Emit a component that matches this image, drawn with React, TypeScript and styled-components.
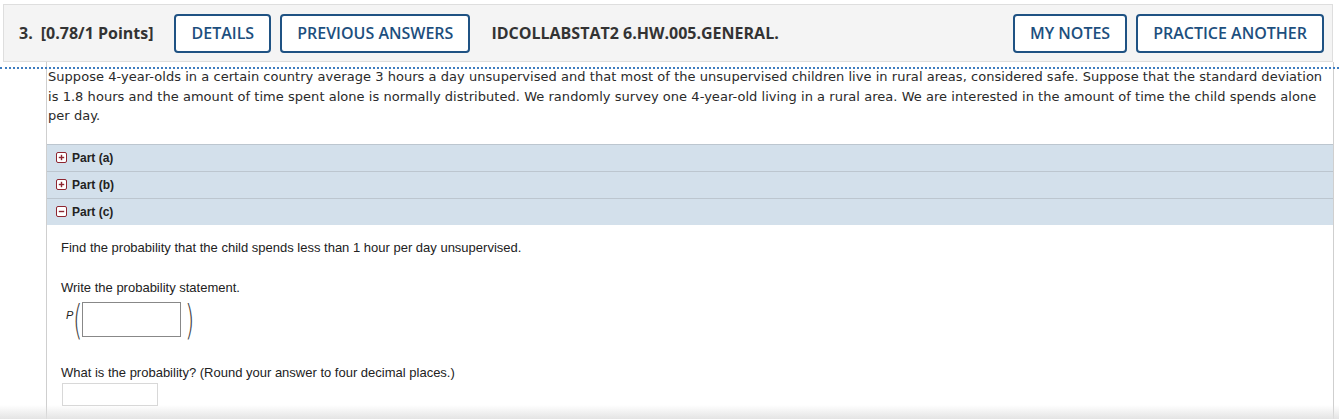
import React from "react";
import styled, { createGlobalStyle } from "styled-components";

const Global = createGlobalStyle`
  html, body { margin: 0; padding: 0; background: #fff; }
  body { width: 1339px; height: 419px; overflow: hidden; }
`;

const Page = styled.div`
  position: relative;
  width: 1339px;
  height: 419px;
  overflow: hidden;
`;

const HeaderWrap = styled.div`
  padding: 4px 6px 0 3px;
`;

const Header = styled.div`
  display: flex;
  align-items: center;
  height: 56px;
  background: #f4f4f4;
  border: 1px solid #dedede;
  padding: 0 8px 0 15px;
  font-family: "Open Sans", "Liberation Sans", sans-serif;
`;

const QNum = styled.span`
  font-weight: 700;
  font-size: 16px;
  color: #333;
  margin-right: 8px;
`;

const Points = styled.span`
  font-weight: 700;
  font-size: 16px;
  color: #333;
  margin-right: 21px;
`;

const Btn = styled.button<{ $last?: boolean }>`
  height: 39px;
  box-sizing: border-box;
  padding: 0 15px;
  margin-right: ${(p) => (p.$last ? 0 : 9)}px;
  border: 2px solid #1f5283;
  border-radius: 4px;
  background: #fff;
  color: #1d4f7e;
  font-family: "Open Sans", "Liberation Sans", sans-serif;
  font-weight: 600;
  font-size: 16px;
`;

const Code = styled.span`
  font-weight: 700;
  font-size: 16px;
  color: #333;
  margin-left: 12px;
  flex: 1;
`;

const FocusRule = styled.div`
  position: absolute;
  left: 0;
  right: 0;
  top: 67px;
  border-top: 2px dotted #3d7cc0;
`;

const Content = styled.div`
  margin: 0 5px 0 46px;
  border-left: 1px solid #cfcfcf;
  border-right: 1px solid #cfcfcf;
  height: 356px;
  padding-top: 5px;
`;

const Intro = styled.p`
  margin: 0 0 18px 0;
  padding: 0 10px 0 1px;
  font-family: "DejaVu Sans", Verdana, sans-serif;
  font-size: 13px;
  line-height: 19.5px;
  color: #2a2a2a;
  letter-spacing: 0.04px;
`;

const PartRow = styled.div`
  display: flex;
  align-items: center;
  height: 26px;
  padding-left: 9px;
  background: #d3e0eb;
  border-top: 1px solid #bcc6cf;
  font-family: "Liberation Sans", Arial, sans-serif;
  font-weight: 700;
  font-size: 12px;
  color: #222;
  gap: 5px;
`;

const PartBody = styled.div`
  padding: 15px 14px 0 14px;
  font-family: "Liberation Sans", Arial, sans-serif;
  font-size: 13px;
  color: #222;
`;

const Line = styled.div<{ $mt?: number }>`
  line-height: 16px;
  margin-top: ${(p) => p.$mt ?? 0}px;
`;

const ProbRow = styled.div`
  display: flex;
  align-items: center;
  margin-top: 6px;
  height: 36px;
  padding-left: 5px;
`;

const PLetter = styled.span`
  font-style: italic;
  font-size: 11px;
  align-self: flex-start;
  margin-top: 7px;
`;

const Paren = styled.span`
  font-family: "DejaVu Sans", sans-serif;
  font-weight: 200;
  font-size: 40px;
  color: #444;
  line-height: 36px;
  transform: scaleX(0.6);
  display: inline-block;
  margin: 0 -3px;
`;

const BigInput = styled.div`
  width: 99px;
  height: 35px;
  box-sizing: border-box;
  border: 1px solid #888;
  background: #fff;
  margin: 0 4px 0 -1px;
`;

const SmallInput = styled.div`
  width: 96px;
  height: 23px;
  box-sizing: border-box;
  border: 1px solid #d8d8d8;
  margin-top: 2px;
  margin-left: 1px;
  background: #fff;
`;

const Fade = styled.div`
  position: absolute;
  left: 0;
  right: 0;
  bottom: 0;
  height: 14px;
  background: linear-gradient(to bottom, rgba(230,230,230,0), rgba(225,225,225,0.9));
  pointer-events: none;
`;

const Toggle = ({ open }: { open?: boolean }) => (
  <svg width="11" height="11" viewBox="0 0 11 11">
    <rect x="0.5" y="0.5" width="10" height="10" rx="1.5" fill="#fff" stroke="#8e2630" />
    <line x1="2.8" y1="5.5" x2="8.2" y2="5.5" stroke="#8e2630" strokeWidth="1.4" />
    {!open && <line x1="5.5" y1="2.8" x2="5.5" y2="8.2" stroke="#8e2630" strokeWidth="1.4" />}
  </svg>
);

export default function App() {
  return (
    <Page>
      <Global />
      <HeaderWrap>
        <Header>
          <QNum>3.</QNum>
          <Points>[0.78/1 Points]</Points>
          <Btn>DETAILS</Btn>
          <Btn>PREVIOUS ANSWERS</Btn>
          <Code>IDCOLLABSTAT2 6.HW.005.GENERAL.</Code>
          <Btn>MY NOTES</Btn>
          <Btn $last>PRACTICE ANOTHER</Btn>
        </Header>
      </HeaderWrap>
      <Content>
        <Intro>
          Suppose 4-year-olds in a certain country average 3 hours a day unsupervised and that most of the
          unsupervised children live in rural areas, considered safe. Suppose that the standard deviation is 1.8
          hours and the amount of time spent alone is normally distributed. We randomly survey one 4-year-old
          living in a rural area. We are interested in the amount of time the child spends alone per day.
        </Intro>
        <PartRow>
          <Toggle />
          Part (a)
        </PartRow>
        <PartRow>
          <Toggle />
          Part (b)
        </PartRow>
        <PartRow>
          <Toggle open />
          Part (c)
        </PartRow>
        <PartBody>
          <Line>Find the probability that the child spends less than 1 hour per day unsupervised.</Line>
          <Line $mt={24}>Write the probability statement.</Line>
          <ProbRow>
            <PLetter>P</PLetter>
            <Paren>(</Paren>
            <BigInput />
            <Paren>)</Paren>
          </ProbRow>
          <Line $mt={27}>What is the probability? (Round your answer to four decimal places.)</Line>
          <SmallInput />
        </PartBody>
      </Content>
      <FocusRule />
      <Fade />
    </Page>
  );
}
